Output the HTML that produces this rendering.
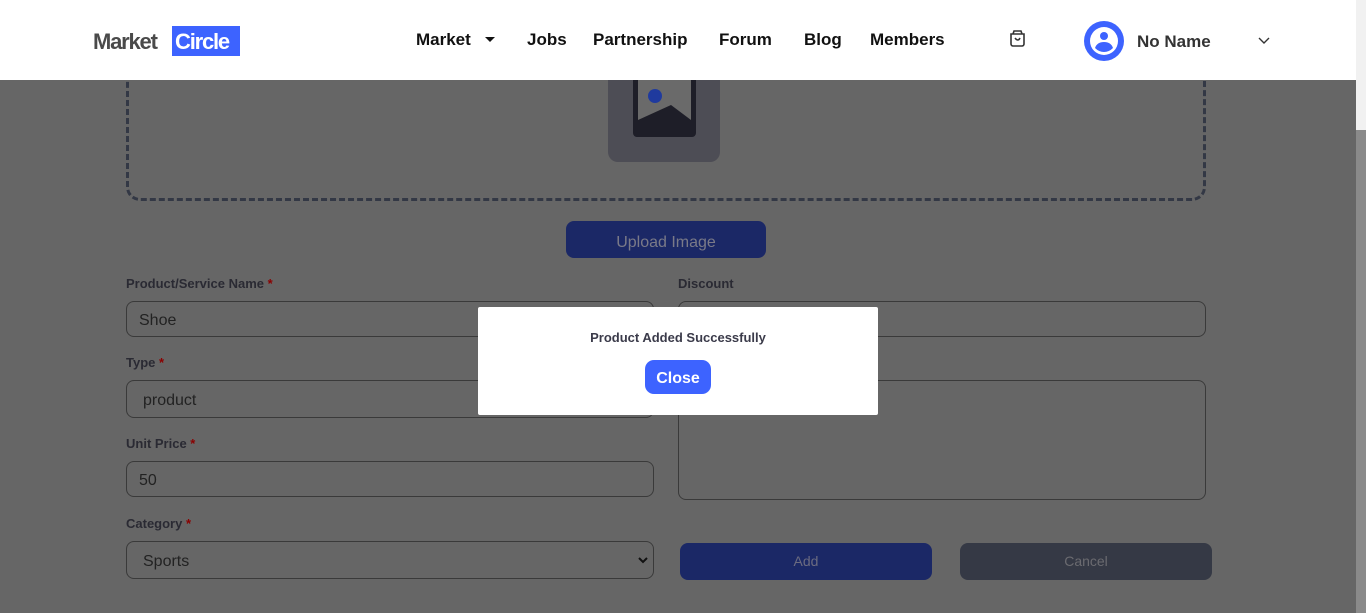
<!DOCTYPE html>
<html><head><meta charset="utf-8"><style>
*{margin:0;padding:0;box-sizing:border-box}
body{width:1366px;height:613px;overflow:hidden;background:#666;font-family:"Liberation Sans",sans-serif;position:relative}
.a{position:absolute}
.nav{font-weight:bold;font-size:17px;color:#111;top:30px}
.lbl{font-weight:bold;font-size:13px;color:#2a2a33}
.lbl span{color:#8b0000}
.inp{border:1px solid #3a3a3a;border-radius:8px;font-size:16px;color:#222;padding-left:12px;padding-top:3px;display:flex;align-items:center}
</style></head><body>
<div class="a" style="left:126px;top:40px;width:1080px;height:161px;border:3px dashed #333845;border-radius:14px"></div>
<div class="a" style="left:608px;top:50px;width:112px;height:112px;background:#4d4d55;border-radius:10px"></div>
<div class="a" style="left:633px;top:75px;width:63px;height:62px;background:#1e1e28;border-radius:4px"></div>
<div class="a" style="left:638px;top:78px;width:53px;height:50px;background:#6a6a6a"></div>
<div class="a" style="left:648px;top:89px;width:14px;height:14px;border-radius:50%;background:#1f3a9e"></div>
<svg class="a" style="left:638px;top:78px" width="53" height="50"><polygon points="0,50 0,42 33,27 53,42 53,50" fill="#1e1e28"/></svg>
<div class="a" style="left:566px;top:221px;width:200px;height:37px;background:#1b2866;border-radius:8px;color:#7a7a88;font-size:16px;text-align:center;line-height:43px">Upload Image</div>

<div class="a lbl" style="left:126px;top:276px">Product/Service Name <span>*</span></div>
<div class="a inp" style="left:126px;top:301px;width:528px;height:36px">Shoe</div>
<div class="a lbl" style="left:678px;top:276px">Discount</div>
<div class="a inp" style="left:678px;top:301px;width:528px;height:36px"></div>
<div class="a lbl" style="left:126px;top:355px">Type <span>*</span></div>
<div class="a inp" style="left:126px;top:380px;width:528px;height:38px;padding-left:16px">product</div>
<div class="a inp" style="left:678px;top:380px;width:528px;height:120px"></div>
<div class="a lbl" style="left:126px;top:436px">Unit Price <span>*</span></div>
<div class="a inp" style="left:126px;top:461px;width:528px;height:36px">50</div>
<div class="a lbl" style="left:126px;top:516px">Category <span>*</span></div>
<div class="a inp" style="left:126px;top:541px;width:528px;height:38px;padding-left:16px">Sports</div>
<svg class="a" style="left:637px;top:555px" width="12" height="10"><path d="M2 3l4 4 4-4" stroke="#111" stroke-width="2" fill="none"/></svg>
<div class="a" style="left:680px;top:543px;width:252px;height:37px;background:#1b2866;border-radius:8px;color:#6b6b80;font-size:14px;text-align:center;line-height:37px">Add</div>
<div class="a" style="left:960px;top:543px;width:252px;height:37px;background:#353945;border-radius:8px;color:#6b6b70;font-size:14px;text-align:center;line-height:37px">Cancel</div>

<div class="a" style="left:0;top:0;width:1356px;height:80px;background:#fff"></div>
<div class="a" style="left:1356px;top:0;width:10px;height:130px;background:#f1f1f1"></div>
<div class="a" style="left:1356px;top:130px;width:10px;height:483px;background:#8a8a8a"></div>
<div class="a" style="left:93px;top:29px;font-weight:bold;font-size:22px;color:#4a4a4a;letter-spacing:-1.2px">Market</div>
<div class="a" style="left:172px;top:26px;width:68px;height:30px;background:#3d63ff;color:#fff;font-weight:bold;font-size:22px;letter-spacing:-1.2px;padding-left:3px;line-height:32px">Circle</div>
<div class="a nav" style="left:416px">Market</div>
<svg class="a" style="left:485px;top:37px" width="10" height="6"><path d="M0 0h10L5 5z" fill="#111"/></svg>
<div class="a nav" style="left:527px">Jobs</div>
<div class="a nav" style="left:593px">Partnership</div>
<div class="a nav" style="left:719px">Forum</div>
<div class="a nav" style="left:804px">Blog</div>
<div class="a nav" style="left:870px">Members</div>
<svg class="a" style="left:1008px;top:29px" width="19" height="19"><path d="M3 5h13v10a2 2 0 0 1-2 2H5a2 2 0 0 1-2-2zM5 5l1-3h7l1 3M7 9q3 4 5 0" stroke="#333" stroke-width="1.6" fill="none"/></svg>
<svg class="a" style="left:1084px;top:21px" width="40" height="40"><circle cx="20" cy="20" r="20" fill="#3d63ff"/><circle cx="20" cy="20" r="14" fill="#fff"/><circle cx="20" cy="15" r="4" fill="#3d63ff"/><path d="M11 27q2-6 9-6t9 6q-4 4-9 4t-9-4z" fill="#3d63ff"/></svg>
<div class="a" style="left:1137px;top:32px;font-weight:bold;font-size:17px;color:#333">No Name</div>
<svg class="a" style="left:1258px;top:37px" width="12" height="8"><path d="M1 1l5 5 5-5" stroke="#333" stroke-width="1.4" fill="none"/></svg>

<div class="a" style="left:478px;top:307px;width:400px;height:108px;background:#fff;border-radius:2px"></div>
<div class="a" style="left:478px;top:330px;width:400px;text-align:center;font-weight:bold;font-size:13px;color:#3b3b4a">Product Added Successfully</div>
<div class="a" style="left:645px;top:360px;width:66px;height:34px;background:#3d63ff;border-radius:9px;color:#fff;font-weight:bold;font-size:16px;text-align:center;line-height:37px">Close</div>
</body></html>
